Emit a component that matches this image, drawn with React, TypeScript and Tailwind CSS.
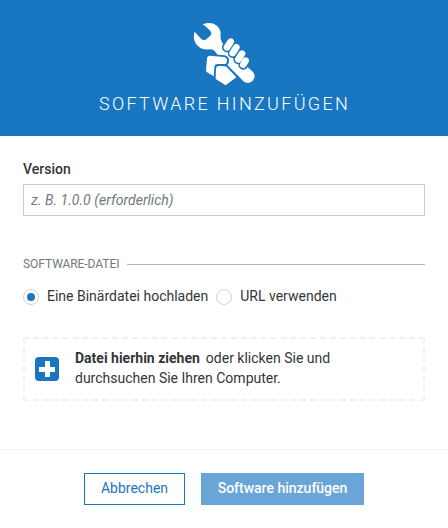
function WrenchHand() {
  return (
    <svg className="h-[75px] w-[90px]" viewBox="0 0 270 225" aria-hidden="true">
      <path
        fill="#fff"
        d="M68 28C92 18 115 28 121 48C123 57 120 66 123 75C127 86 134 92 141 99L216 168C226 177 226 189 218 197C210 205 197 205 189 197L140 148L110 116C104 106 97 102 88 103C75 105 60 102 51 90C42 79 39 64 44 50L63 71Q69 77 77 74L86 67Q95 60 94 53Q92 46 68 28Z"
      />
      <g fill="none" stroke="#1976c1" strokeWidth="30" strokeLinecap="round">
        <path d="M152 80L141 97M169 97L158 114M186 116L175 133M197 137L190 149" />
      </g>
      <g fill="none" stroke="#fff" strokeWidth="20" strokeLinecap="round">
        <path d="M152 80L141 97M169 97L158 114M186 116L175 133M197 137L190 149" />
      </g>
      <path
        d="M88 122L133 126Q142 128 142 137Q142 148 132 148L115 147L107 153L171 187L137 211L78 168L81 130Q82 122 88 122Z"
        fill="#1976c1"
        stroke="#1976c1"
        strokeWidth="10"
        strokeLinejoin="round"
      />
      <path fill="#fff" d="M88 122L133 126Q141 128 141 137Q141 147 132 147L112 147Q104 148 103 155L101 184L80 171Q78 169 78 166L81 130Q82 122 88 122Z" />
      <path fill="#fff" d="M115 153L135 154Q141 155 145 161L169 187L137 211L107 192L108 160Q109 154 115 153Z" />
    </svg>
  );
}

function Radio({ label, checked }: { label: string; checked?: boolean }) {
  return (
    <label className="flex h-5 items-center gap-2">
      <span className="flex size-4 items-center justify-center rounded-full border border-[#cfd4d8]">
        {checked && <span className="size-2 rounded-full bg-[#1976c1]" />}
      </span>
      <span className="-mt-0.5">{label}</span>
    </label>
  );
}

export default function App() {
  return (
    <div className="h-[528px] w-[448px] overflow-hidden bg-white font-[Roboto,sans-serif] text-sm leading-5 text-[#333638]">
      <header className="flex h-[136px] flex-col items-center bg-[#1976c1] pt-[15px]">
        <div className="pl-[2px]">
          <WrenchHand />
        </div>
        <h1 className="pl-px text-[18px] leading-7 font-light tracking-[2.3px] whitespace-nowrap text-white">
          SOFTWARE HINZUFÜGEN
        </h1>
      </header>
      <main className="flex h-[313px] flex-col px-[23px] pt-[23px]">
        <label className="font-medium">Version</label>
        <input
          className="mt-[5px] h-8 w-full border border-[#c8cbce] px-[7px] text-sm tracking-[0.04px] placeholder:text-[#6f787e] placeholder:italic"
          placeholder="z. B. 1.0.0 (erforderlich)"
        />
        <div className="mt-[38px] flex h-5 items-center gap-2 text-xs text-[#6f787e]">
          <span className="w-24 tracking-[-0.06px] whitespace-nowrap">SOFTWARE-DATEI</span>
          <span className="h-px flex-1 bg-[#b0b7bc]" />
        </div>
        <div className="mt-[13px] flex gap-2">
          <Radio label="Eine Binärdatei hochladen" checked />
          <Radio label="URL verwenden" />
        </div>
        <div className="mt-[30px] flex h-16 items-center border-2 border-dashed border-[#f0f0f0] pl-[10px]">
          <svg className="size-6 shrink-0" viewBox="0 0 24 24" aria-hidden="true">
            <rect width="24" height="24" rx="4" fill="#1976c1" />
            <path d="M12.5 4v16M4 12.5h16" stroke="#fff" strokeWidth="5" />
          </svg>
          <p className="-mt-[2px] ml-4 w-[290px]">
            <b className="mr-[6px] font-bold">Datei hierhin ziehen</b>oder klicken Sie und
            <br />
            durchsuchen Sie Ihren Computer.
          </p>
        </div>
      </main>
      <footer className="flex justify-center gap-4 border-t border-[#f0f0f0] pt-[23px]">
        <button className="h-8 w-[101px] border border-[#1976c1] pb-0.5 text-[#1976c1]">Abbrechen</button>
        <button className="h-8 w-[163px] bg-[#6aa5d7] pb-0.5 font-medium text-white">Software hinzufügen</button>
      </footer>
    </div>
  );
}
